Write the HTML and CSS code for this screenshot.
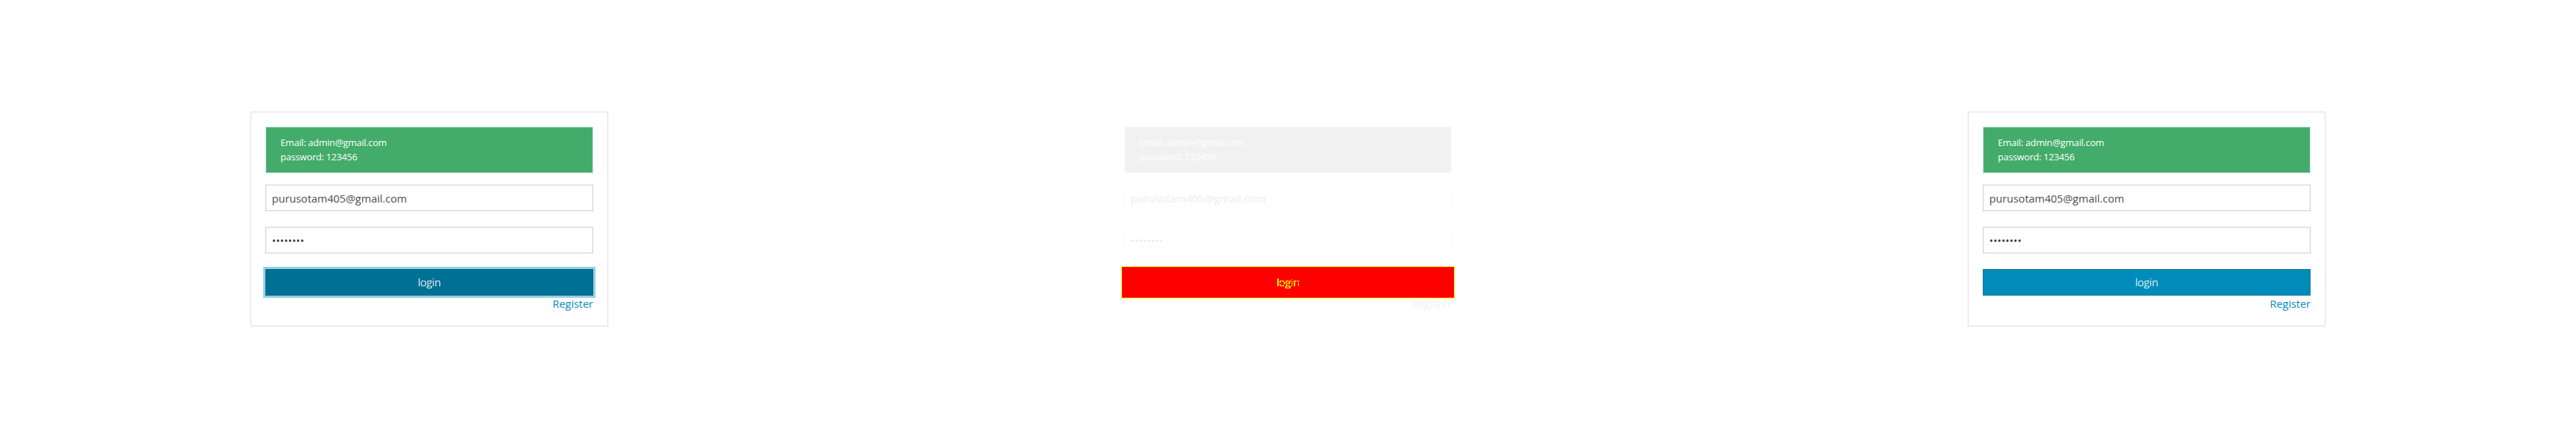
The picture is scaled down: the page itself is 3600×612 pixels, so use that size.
FILE: index.html
```html
<!DOCTYPE html>
<html lang="en">
<head>
<meta charset="utf-8">
<title>Login</title>
<link rel="stylesheet" href="styles.css">
</head>
<body>
<svg class="defs" width="0" height="0" aria-hidden="true">
  <filter id="edges" color-interpolation-filters="sRGB">
    <feComponentTransfer>
      <feFuncA type="discrete" tableValues="0 0 1 1 1 1 1 0"/>
    </feComponentTransfer>
  </filter>
</svg>
<main class="panels">
  <section class="panel">
    <form class="card">
      <div class="alert">Email: admin@gmail.com<br>password: 123456</div>
      <div class="field">purusotam405@gmail.com</div>
      <div class="field field-password">••••••••</div>
      <button class="button button-focus" type="button"><span>login</span></button>
      <a class="register">Register</a>
    </form>
  </section>
  <section class="panel">
    <form class="card card-diff">
      <div class="alert">Email: admin@gmail.com<br>password: 123456</div>
      <div class="field">purusotam405@gmail.com</div>
      <div class="field field-password">••••••••</div>
      <button class="button" type="button"><span>login</span></button>
      <a class="register">Register</a>
    </form>
  </section>
  <section class="panel">
    <form class="card">
      <div class="alert">Email: admin@gmail.com<br>password: 123456</div>
      <div class="field">purusotam405@gmail.com</div>
      <div class="field field-password">••••••••</div>
      <button class="button" type="button"><span>login</span></button>
      <a class="register">Register</a>
    </form>
  </section>
</main>
</body>
</html>
```

FILE: styles.css
```css
* { box-sizing: border-box; }
body {
  margin: 0;
  background: #fff;
  font-family: "Open Sans", "Noto Sans", sans-serif;
}
.defs { position: absolute; }
.panels {
  display: grid;
  grid-template-columns: repeat(3, 1200px);
  height: 612px;
}
.panel {
  display: flex;
  align-items: center;
  justify-content: center;
}
.card {
  display: flex;
  flex-direction: column;
  width: 500px;
  height: 300px;
  padding: 20px;
  border: 1px solid #ddd;
}
.card > * { flex-shrink: 0; }
.alert {
  height: 65px;
  margin-bottom: 16px;
  padding: 11px 20px;
  border: 1px solid #c7e8d3;
  background: #43ac6a;
  color: #fff;
  font-size: 13px;
  letter-spacing: -0.18px;
  line-height: 20px;
}
.field {
  height: 37px;
  margin-bottom: 22px;
  padding: 0 8px;
  border: 1px solid #ccc;
  color: #4d4d4d;
  font-size: 15px;
  line-height: 37px;
}
.field-password { color: #404040; }
.button {
  width: 100%;
  height: 37px;
  padding: 0;
  border: 1px solid #007095;
  border-radius: 0;
  background: #008cba;
  color: #fff;
  font-family: "Open Sans", "Noto Sans", sans-serif;
  font-size: 15px;
  font-weight: 300;
  line-height: 35px;
  -webkit-text-stroke: 0.2px currentColor;
}
.button-focus {
  border-color: #006385;
  background: #007095;
  box-shadow: 0 0 0 3px #93cee1, 0 0 0 4px #e9f5f9;
}
.register {
  align-self: flex-end;
  color: #008cba;
  font-size: 15px;
  line-height: 22px;
}
.card-diff { border-color: #fafafa; }
.card-diff .alert {
  border-color: #fafafa;
  background: #f1f1f1;
}
.card-diff .field {
  border-color: #fafafa;
  color: #ededed;
}
.card-diff .button {
  border: 0;
  background: #f00;
  color: #ff0;
  box-shadow: 0 0 0 3px #f00, 0 0 0 4px #ff0;
}
.card-diff .button span {
  display: inline-block;
  filter: url(#edges);
}
.card-diff .register { color: #f2f2f2; }
```
